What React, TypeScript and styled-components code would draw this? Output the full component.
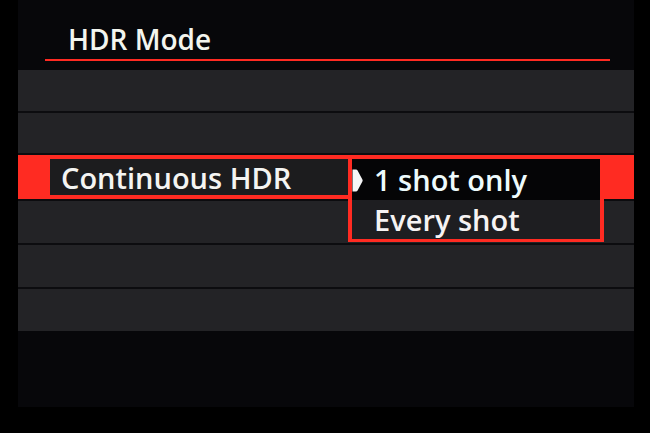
import React from 'react';
import styled, { createGlobalStyle } from 'styled-components';

const GlobalStyle = createGlobalStyle`
  html, body {
    margin: 0;
    padding: 0;
    background: #000;
  }
  body {
    font-family: 'Open Sans', 'Noto Sans', 'DejaVu Sans', sans-serif;
  }
`;

const rows: { height: number; selected?: boolean }[] = [
  { height: 41 },
  { height: 40 },
  { height: 44, selected: true },
  { height: 42 },
  { height: 42 },
  { height: 42 },
];

const options = ['1 shot only', 'Every shot'];

const App = () => {
  return (
    <>
      <GlobalStyle />
      <Bezel>
        <Screen>
          <Header>
            <Title>HDR Mode</Title>
          </Header>
          <MenuList $template={rows.map((r) => `${r.height}px`).join(' ')}>
            {rows.map((row, i) =>
              row.selected ? (
                <SelectedRow key={i}>
                  <LabelBox>Continuous HDR</LabelBox>
                  <Dropdown>
                    {options.map((opt, j) => (
                      <Option key={opt} $active={j === 0}>
                        <Marker>{j === 0 && <MarkerIcon />}</Marker>
                        {opt}
                      </Option>
                    ))}
                  </Dropdown>
                </SelectedRow>
              ) : (
                <Row key={i} />
              )
            )}
          </MenuList>
        </Screen>
      </Bezel>
    </>
  );
};

// selection marker
const MarkerIcon = () => (
  <svg width="11" height="23" viewBox="0 0 11 23">
    <path d="M0.5 0.5 H4 Q5 0.5 5.6 1.5 L10.4 10.5 Q11 11.5 10.4 12.5 L5.6 21.5 Q5 22.5 4 22.5 H0.5 Z" fill="#f6f6f6" />
  </svg>
);

const Bezel = styled.div`
  width: 650px;
  height: 433px;
  background: #000;
  padding: 0 16px 0 18px;
  box-sizing: border-box;
  overflow: hidden;
`;

const Screen = styled.div`
  height: 407px;
  background: #07070a;
  display: flex;
  flex-direction: column;
`;

const Header = styled.div`
  display: flex;
  align-items: flex-end;
  margin: 0 24px 0 27px;
  border-bottom: 2px solid #ff2a22;
  box-sizing: border-box;
  height: 61px;
`;

const Title = styled.h1`
  margin: 0 0 6px 23px;
  font-size: 28px;
  line-height: 28px;
  font-weight: 600;
  color: #f3f5ee;
  letter-spacing: 0;
`;

const MenuList = styled.div<{ $template: string }>`
  margin-top: 9px;
  display: grid;
  grid-template-rows: ${(p) => p.$template};
  row-gap: 2px;
  background: #0c0c0f;
`;

const Row = styled.div`
  background: #232326;
`;

const SelectedRow = styled.div`
  position: relative;
  background: #ff2b22;
  display: flex;
  align-items: center;
  padding: 4px 0;
  box-sizing: border-box;
`;

const LabelBox = styled.div`
  margin-left: 32px;
  width: 320px;
  height: 100%;
  background: #1c1c1e;
  display: flex;
  align-items: center;
  padding-left: 11px;
  box-sizing: border-box;
  font-size: 29px;
  font-weight: 600;
  color: #f4f4f2;
  white-space: nowrap;
`;

const Dropdown = styled.div`
  position: absolute;
  left: 330px;
  top: 0;
  width: 256px;
  height: 87px;
  box-sizing: border-box;
  border: 4px solid #ff2b22;
  border-bottom-width: 3px;
  display: grid;
  grid-template-rows: 41px 1fr;
  z-index: 1;
`;

const Option = styled.div<{ $active: boolean }>`
  display: flex;
  align-items: center;
  background: ${(p) => (p.$active ? '#050506' : '#1e1e21')};
  font-size: 29px;
  font-weight: 600;
  color: ${(p) => (p.$active ? '#eefbfc' : '#f6f3f3')};
  white-space: nowrap;
`;

const Marker = styled.span`
  width: 22px;
  flex: 0 0 22px;
  display: flex;
  align-items: center;
  padding-top: 1px;
`;

export default App;
